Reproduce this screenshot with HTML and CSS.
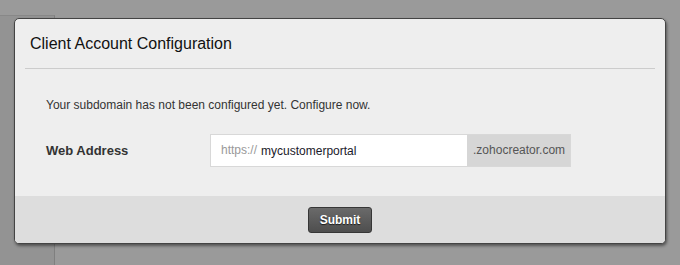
FILE: index.html
```html
<!DOCTYPE html>
<html lang="en">
<head>
  <meta charset="UTF-8">
  <meta name="viewport" content="width=device-width, initial-scale=1.0">
  <title>Client Account Configuration</title>
  <link rel="stylesheet" href="styles.css">
</head>
<body>
  <div class="page">
    <div class="sidebar"></div>
  </div>

  <div class="dialog">
    <div class="dialog-header">
      <h2>Client Account Configuration</h2>
    </div>

    <div class="dialog-body">
      <p class="message">Your subdomain has not been configured yet. Configure now.</p>
      <div class="form-row">
        <label for="subdomain">Web Address</label>
        <div class="url-field">
          <span class="prefix">https://</span>
          <input type="text" id="subdomain" value="mycustomerportal">
          <span class="suffix">.zohocreator.com</span>
        </div>
      </div>
    </div>

    <div class="dialog-footer">
      <button class="submit-btn">Submit</button>
    </div>
  </div>
</body>
</html>
```

FILE: styles.css
```css
html, body {
  margin: 0;
  padding: 0;
  height: 100%;
}
body {
  font-family: "Liberation Sans", Arial, sans-serif;
  background-color: #9a9a9a;
  overflow: hidden;
}
.page {
  height: 100%;
  padding-top: 15px;
  box-sizing: border-box;
}
.sidebar {
  width: 54px;
  height: 100%;
  background-color: #939393;
  border-top: 1px solid #888;
  border-right: 1px solid #7f7f7f;
}
.dialog {
  position: absolute;
  left: 14px;
  top: 18px;
  width: 650px;
  height: 224px;
  background-color: #eeeeee;
  border: 1px solid #444;
  border-radius: 5px;
  box-shadow: 1px 2px 3px rgba(0, 0, 0, 0.45);
  display: flex;
  flex-direction: column;
  overflow: hidden;
}
.dialog-header {
  margin: 0 10px;
  padding: 0 5px;
  height: 49px;
  border-bottom: 1px solid #cccccc;
}
.dialog-header h2 {
  margin: 0;
  font-size: 16px;
  font-weight: normal;
  line-height: 49px;
  color: #111;
}
.dialog-body {
  flex: 1;
  padding: 28px 31px 0;
}
.message {
  margin: 0 0 21px;
  font-size: 12px;
  line-height: 16px;
  color: #333;
}
.form-row {
  display: flex;
  align-items: center;
}
.form-row label {
  width: 164px;
  font-size: 13px;
  font-weight: bold;
  color: #333;
}
.url-field {
  display: flex;
  height: 33px;
  box-sizing: border-box;
  border: 1px solid #d8d8d8;
  background-color: #fff;
  width: 361px;
}
.prefix {
  padding-left: 10px;
  font-size: 12px;
  line-height: 31px;
  color: #999;
}
.url-field input {
  width: 206px;
  border: none;
  outline: none;
  padding: 0 0 0 4px;
  font-family: inherit;
  font-size: 12px;
  color: #1a1a2a;
  background: transparent;
}
.suffix {
  flex: 1;
  background-color: #d6d6d6;
  padding-left: 6px;
  font-size: 12px;
  line-height: 31px;
  color: #555;
}
.dialog-footer {
  height: 47px;
  background-color: #dddddd;
  display: flex;
  justify-content: center;
  align-items: flex-start;
}
.submit-btn {
  margin-top: 11px;
  width: 64px;
  height: 26px;
  border: 1px solid #363636;
  border-radius: 3px;
  background: linear-gradient(#6a6a6a, #4e4e4e);
  color: #fff;
  font-family: inherit;
  font-size: 12px;
  font-weight: bold;
  text-shadow: 0 1px 1px rgba(0, 0, 0, 0.7);
  cursor: pointer;
}
```
